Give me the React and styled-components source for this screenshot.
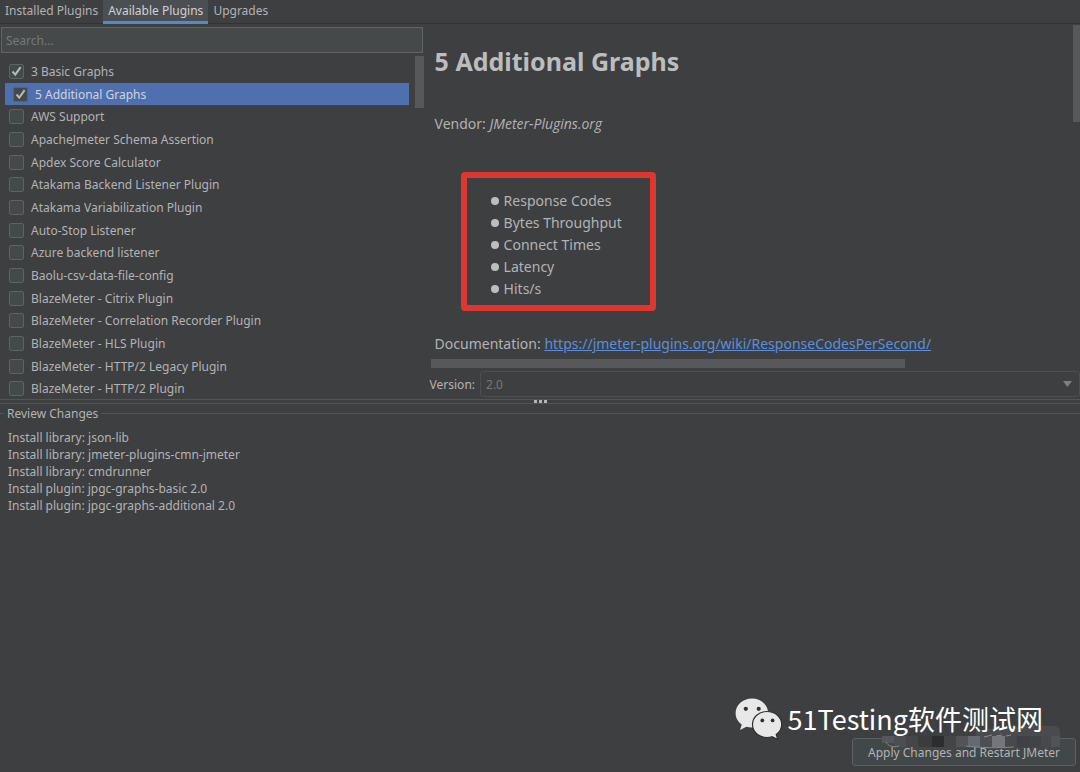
import { useState } from "react";
import styled, { createGlobalStyle } from "styled-components";

const plugins = [
    "3 Basic Graphs",
    "5 Additional Graphs",
    "AWS Support",
    "ApacheJmeter Schema Assertion",
    "Apdex Score Calculator",
    "Atakama Backend Listener Plugin",
    "Atakama Variabilization Plugin",
    "Auto-Stop Listener",
    "Azure backend listener",
    "Baolu-csv-data-file-config",
    "BlazeMeter - Citrix Plugin",
    "BlazeMeter - Correlation Recorder Plugin",
    "BlazeMeter - HLS Plugin",
    "BlazeMeter - HTTP/2 Legacy Plugin",
    "BlazeMeter - HTTP/2 Plugin",
]

const tabs = ["Installed Plugins", "Available Plugins", "Upgrades"]

const features = ["Response Codes", "Bytes Throughput", "Connect Times", "Latency", "Hits/s"]

const changes = [
    "Install library: json-lib",
    "Install library: jmeter-plugins-cmn-jmeter",
    "Install library: cmdrunner",
    "Install plugin: jpgc-graphs-basic 2.0",
    "Install plugin: jpgc-graphs-additional 2.0",
]

const docUrl = "https://jmeter-plugins.org/wiki/ResponseCodesPerSecond/"

// x, y, width, height, colour
const tiles = [
    [0, 10, 12, 7, "#55575a"],
    [12, 10, 12, 11, "#4c4f51"],
    [24, 10, 12, 11, "#444648"],
    [36, 10, 14, 11, "#3b3c3e"],
    [50, 10, 12, 11, "#2c2d2f"],
    [62, 10, 12, 11, "#434547"],
    [74, 10, 12, 11, "#525456"],
    [86, 10, 12, 11, "#666872"],
    [98, 10, 12, 11, "#4d4f52"],
    [110, 10, 13, 11, "#74767c"],
    [123, 10, 12, 11, "#47494d"],
    [135, 10, 12, 11, "#3f4146"],
    [147, 10, 12, 11, "#414347"],
    [159, 10, 10, 11, "#47494c"],
    [169, 10, 9, 11, "#505254"],
]

export default function App() {
    const [selected, setSelected] = useState("5 Additional Graphs")
    const [checked, setChecked] = useState(["3 Basic Graphs", "5 Additional Graphs"])
    const [tab, setTab] = useState("Available Plugins")

    function toggle(name) {
        setSelected(name)
        setChecked(checked.includes(name) ? checked.filter((c) => c !== name) : [...checked, name])
    }

    return (
        <>
            <GlobalStyle />
            <Window>
                <Tabs>
                    {tabs.map((t) => (
                        <Tab key={t} type="button" $active={t === tab} onClick={() => setTab(t)}>{t}</Tab>
                    ))}
                </Tabs>
                <TopPane>
                    <Left>
                        <Search type="text" placeholder="Search..." aria-label="Search" />
                        <ListArea>
                            <List>
                                {plugins.map((name) => (
                                    <Row key={name} $selected={name === selected}>
                                        <input
                                            type="checkbox"
                                            checked={checked.includes(name)}
                                            onChange={() => toggle(name)}
                                        />
                                        <Box>
                                            {checked.includes(name) && <Check />}
                                        </Box>
                                        {name}
                                    </Row>
                                ))}
                            </List>
                            <ListThumb />
                        </ListArea>
                    </Left>
                    <Right>
                        <Details>
                            <Info>
                                <h1>5 Additional Graphs</h1>
                                <p>Vendor: <i>JMeter-Plugins.org</i></p>
                                <Features>
                                    {features.map((f) => (
                                        <li key={f}>{f}</li>
                                    ))}
                                </Features>
                                <p>Documentation: <a href={docUrl}>{docUrl}</a></p>
                            </Info>
                            <SideThumb />
                        </Details>
                        <BottomThumb />
                        <Version>
                            <label htmlFor="version">Version:</label>
                            <SelectBox>
                                <select id="version" disabled>
                                    <option>2.0</option>
                                </select>
                                <Arrow />
                            </SelectBox>
                        </Version>
                    </Right>
                </TopPane>
                <Divider>
                    <svg width="13" height="3" viewBox="0 0 13 3" fill="#b4b6b7">
                        <rect x="0" width="3" height="3" />
                        <rect x="5" width="3" height="3" />
                        <rect x="10" width="3" height="3" />
                    </svg>
                </Divider>
                <Review>
                    <legend>Review Changes</legend>
                    {changes.map((c) => (
                        <p key={c}>{c}</p>
                    ))}
                </Review>
                <Footer>
                    <Apply type="button">Apply Changes and Restart JMeter</Apply>
                    <Mosaic />
                </Footer>
                <Watermark>
                    <WechatLogo />
                    <span>51Testing软件测试网</span>
                </Watermark>
            </Window>
        </>
    )
}

function Check() {
    return (
        <svg width="13" height="13" viewBox="0 0 13 13" fill="none" stroke="#b8babb" strokeWidth="2">
            <path d="M2.5 6.5 L5.3 9.6 L10.6 2.2" />
        </svg>
    )
}

function Arrow() {
    return (
        <svg width="9" height="6" viewBox="0 0 9 6" fill="#7d8082">
            <path d="M0 0 H9 L4.5 6 Z" />
        </svg>
    )
}

function Mosaic() {
    return (
        <Tiles width="178" height="26" viewBox="0 0 178 26">
            <path d="M94 10 V4 L140 0 H172 a6 6 0 0 1 6 6 V10 Z" fill="#494b4e" />
            {tiles.map(([x, y, w, h, fill]) => (
                <rect key={x} x={x} y={y} width={w} height={h} fill={fill} />
            ))}
            <path d="M4 16 C6 20 11 22 17 20" fill="none" stroke="#85888a" strokeWidth="1" />
            <path d="M84 20 C98 22 116 22 132 21" fill="none" stroke="#85888a" strokeWidth="1" />
            <path d="M102 11 l8 -2 M114 10 l6 -1 M124 10 l5 -1" fill="none" stroke="#8b8d90" strokeWidth="1" />
        </Tiles>
    )
}

function WechatLogo() {
    return (
        <svg width="48" height="42" viewBox="0 0 48 42">
            <path
                fill="#e8e8e8"
                d="M17 .5C7.800 .5 .6 7 .6 15.200c0 4.600 2.400 8.600 6.200 11.200L5 32l6.400-3.300c1.700.5 3.500.8 5.400.8 9 0 16.400-6.300 16.400-14.300S26 .5 17 .5z"
            />
            <path
                fill="#e8e8e8"
                stroke="#2f3032"
                strokeWidth="1.200"
                d="M32 13.500c-8.300 0-14.500 5.800-14.500 13s6.200 13 14.500 13c1.800 0 3.400-.3 5-.8l5.800 2.800-1.600-5c3.400-2.400 5.500-6 5.500-10 0-7.200-6.400-13-14.700-13z"
            />
            <g fill="#303133">
                <circle cx="10.800" cy="10.800" r="2.100" />
                <circle cx="23.700" cy="10.800" r="2.100" />
                <circle cx="27.300" cy="22.400" r="1.900" />
                <circle cx="37.600" cy="22.400" r="1.900" />
            </g>
        </svg>
    )
}

const GlobalStyle = createGlobalStyle`
    * {
        box-sizing: border-box;
    }
    body {
        margin: 0;
        background-color: #3e3f41;
        color: #b2b3b4;
        font-family: "Noto Sans", "Noto Sans CJK SC", sans-serif;
        font-size: 12px;
    }
    button, input, select {
        font-family: inherit;
        font-size: inherit;
        color: inherit;
    }
    p, h1, ul {
        margin: 0;
        padding: 0;
    }
`

const Window = styled.div`
    position: relative;
    min-height: 100vh;
    display: flex;
    flex-direction: column;
    overflow: hidden;
`

const Tabs = styled.div`
    display: flex;
    height: 24px;
    border-bottom: 1px solid #323335;
`

const Tab = styled.button`
    height: 24px;
    padding: 0 5px;
    border: 0;
    border-bottom: 3px solid ${(props) => (props.$active ? "#4f8cc9" : "transparent")};
    background-color: ${(props) => (props.$active ? "#4c4f51" : "transparent")};
    color: ${(props) => (props.$active ? "#cfd1d2" : "inherit")};
    white-space: nowrap;
`

const TopPane = styled.div`
    display: grid;
    grid-template-columns: 39.500% 1fr;
    height: 375px;
`

const Left = styled.div`
    display: flex;
    flex-direction: column;
    padding: 3px 3px 0 0;
`

const Search = styled.input`
    height: 26px;
    margin: 0 1px 0 1px;
    padding: 0 4px;
    border: 1px solid #616466;
    background-color: #46494a;
    &::placeholder {
        color: #75787a;
        opacity: 1;
    }
`

const ListArea = styled.div`
    flex: 1;
    display: flex;
    gap: 6px;
    padding-top: 3px;
`

const List = styled.div`
    flex: 1;
    height: 340px;
    margin: 4px 0 0 5px;
    display: flex;
    flex-direction: column;
`

const Row = styled.label`
    flex: 1;
    display: flex;
    align-items: center;
    gap: 7px;
    padding-left: ${(props) => (props.$selected ? "8px" : "4px")};
    background-color: ${(props) => (props.$selected ? "#4f6fae" : "transparent")};
    color: ${(props) => (props.$selected ? "#d0d4dc" : "inherit")};
    white-space: nowrap;
    input {
        position: absolute;
        opacity: 0;
    }
`

const Box = styled.span`
    width: 15px;
    height: 15px;
    display: flex;
    align-items: center;
    justify-content: center;
    border: 1px solid #5e6263;
    border-radius: 2px;
    background-color: #44494a;
`

const ListThumb = styled.div`
    width: 9px;
    height: 52px;
    background-color: #575859;
`

const Right = styled.div`
    display: flex;
    flex-direction: column;
    padding-left: 3px;
    min-width: 0;
`

const Details = styled.div`
    flex: 1;
    display: flex;
    justify-content: space-between;
`

const Info = styled.div`
    padding: 15px 0 0 5px;
    font-size: 14px;
    line-height: 22px;
    white-space: nowrap;
    h1 {
        margin-bottom: 30px;
        font-size: 25px;
        line-height: 44px;
        font-weight: 700;
        color: #bbbdbe;
    }
    i {
        font-family: "Open Sans", sans-serif;
    }
    a {
        color: #5b8fdb;
    }
`

const Features = styled.ul`
    width: 195px;
    margin: 37px 0 22px 26px;
    padding: 12px 0 5px 24px;
    border: 6px solid #dd3730;
    border-radius: 4px;
    list-style: none;
    li {
        display: flex;
        align-items: center;
        gap: 5px;
    }
    li::before {
        content: "";
        width: 8px;
        height: 8px;
        border-radius: 50%;
        background-color: #bbbdbe;
    }
`

const SideThumb = styled.div`
    width: 7px;
    height: 97px;
    margin-top: 1px;
    background-color: #575859;
`

const BottomThumb = styled.div`
    width: 73%;
    height: 9px;
    margin: 0 0 3px 1px;
    background-color: #575859;
`

const Version = styled.div`
    display: flex;
    align-items: center;
    gap: 5px;
    padding-bottom: 3px;
`

const SelectBox = styled.div`
    flex: 1;
    display: grid;
    align-items: center;
    select {
        grid-area: 1 / 1;
        height: 26px;
        padding: 0 5px;
        appearance: none;
        border: 1px solid #4d4f51;
        border-radius: 3px;
        background-color: transparent;
        color: #75787a;
        opacity: 1;
    }
    svg {
        grid-area: 1 / 1;
        justify-self: end;
        margin-right: 8px;
        pointer-events: none;
    }
`

const Divider = styled.div`
    height: 5px;
    display: flex;
    align-items: center;
    justify-content: center;
    border-top: 1px solid #525456;
    border-bottom: 1px solid #525456;
`

const Review = styled.fieldset`
    flex: 1;
    margin: 0;
    padding: 6px 8px;
    border: 0;
    border-top: 1px solid #525456;
    line-height: 17px;
    legend {
        margin-left: -4px;
        padding: 0 3px;
        line-height: 19px;
    }
`

const Footer = styled.footer`
    position: relative;
    display: flex;
    justify-content: flex-end;
    padding: 0 4px 6px;
`

const Apply = styled.button`
    height: 28px;
    padding: 0 15px;
    border: 1px solid #5c6163;
    border-radius: 3px;
    background-color: #424749;
    white-space: nowrap;
`

const Tiles = styled.svg`
    position: absolute;
    right: 20px;
    bottom: 20px;
    pointer-events: none;
`

const Watermark = styled.div`
    position: absolute;
    right: 37px;
    bottom: 32px;
    display: flex;
    align-items: center;
    gap: 5px;
    font-family: "Noto Sans CJK SC", sans-serif;
    font-size: 27px;
    line-height: 42px;
    color: #fff;
    pointer-events: none;
`
